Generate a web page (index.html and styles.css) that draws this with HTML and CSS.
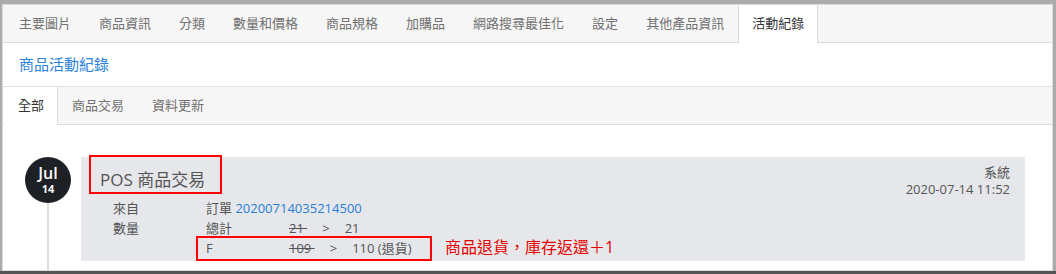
FILE: index.html
```html
<!DOCTYPE html>
<html lang="zh-Hant">
<head>
  <meta charset="UTF-8">
  <title>商品活動紀錄</title>
  <link rel="stylesheet" href="styles.css">
</head>
<body>
  <div class="panel">
    <ul class="tabs">
      <li>主要圖片</li>
      <li>商品資訊</li>
      <li>分類</li>
      <li>數量和價格</li>
      <li>商品規格</li>
      <li>加購品</li>
      <li>網路搜尋最佳化</li>
      <li>設定</li>
      <li>其他產品資訊</li>
      <li class="active">活動紀錄</li>
    </ul>

    <div class="title">商品活動紀錄</div>

    <ul class="subtabs">
      <li class="active">全部</li>
      <li>商品交易</li>
      <li>資料更新</li>
    </ul>

    <div class="timeline">
      <div class="tl-item">
        <div class="tl-side">
          <div class="tl-date">
            <span class="month">Jul</span>
            <span class="day">14</span>
          </div>
          <div class="tl-line"></div>
        </div>

        <div class="card">
          <div class="card-main">
            <div class="card-title">POS 商品交易</div>
            <div class="drow">
              <span class="dlabel">來自</span>
              <span>訂單 <a class="link">20200714035214500</a></span>
            </div>
            <div class="drow">
              <span class="dlabel">數量</span>
              <span class="sub">總計</span>
              <span class="old">21&nbsp;</span>
              <span class="arrow">&gt;</span>
              <span>21</span>
            </div>
            <div class="drow">
              <span class="dlabel"></span>
              <span class="sub">F</span>
              <span class="old">109&nbsp;</span>
              <span class="arrow">&gt;</span>
              <span>110 (退貨)</span>
            </div>
          </div>
          <div class="card-meta">
            <div>系統</div>
            <div>2020-07-14 11:52</div>
          </div>

          <!-- annotations -->
          <div class="mark mark-title"></div>
          <div class="mark mark-row"></div>
          <div class="note">商品退貨，庫存返還＋1</div>
        </div>
      </div>
    </div>
  </div>
  <div class="shade"></div>
</body>
</html>
```

FILE: styles.css
```css
html, body {
  height: 274px;
  overflow: hidden;
}
body {
  margin: 0;
  background: #ababab;
  font-family: "Open Sans", "Noto Sans CJK TC", sans-serif;
  font-size: 13px;
  color: #555;
}
.panel {
  box-sizing: border-box;
  margin: 4px 3px 0 2px;
  height: 267px;
  background: #fff;
  border: 1px solid #dcdcdc;
  overflow: hidden;
}
.shade {
  height: 3px;
  background: #555;
}
ul {
  list-style: none;
  margin: 0;
  padding: 0;
}
.tabs {
  display: flex;
  padding-left: 1px;
  height: 37px;
  background: #f6f6f6;
  border-bottom: 1px solid #dcdcdc;
}
.tabs li,
.subtabs li {
  padding: 0 13px;
  line-height: 37px;
  color: #707070;
  border-left: 1px solid transparent;
  border-right: 1px solid transparent;
}
.tabs li:first-child {
  padding-left: 14px;
}
.tabs li.active {
  background: #fff;
  color: #333;
  border-color: #dcdcdc;
  height: 38px;
}
.title {
  height: 43px;
  line-height: 43px;
  padding-left: 16px;
  font-size: 15px;
  color: #2a82d9;
  border-bottom: 1px solid #e2e2e2;
}
.subtabs {
  display: flex;
  padding-left: 1px;
  height: 37px;
  background: #f6f6f6;
  border-bottom: 1px solid #dcdcdc;
}
.subtabs li.active {
  background: #fff;
  color: #333;
  border-right-color: #dcdcdc;
  height: 38px;
}
.timeline {
  padding: 32px 0 0 22px;
}
.tl-item {
  display: flex;
  min-height: 150px;
}
.tl-side {
  width: 46px;
  display: flex;
  flex-direction: column;
  align-items: center;
}
.tl-date {
  width: 46px;
  height: 46px;
  border-radius: 50%;
  background: #1d2126;
  color: #fff;
  display: flex;
  flex-direction: column;
  align-items: center;
  justify-content: center;
  gap: 2px;
}
.month {
  font-size: 16px;
  font-weight: 600;
  line-height: 15px;
}
.day {
  font-size: 11px;
  font-weight: 700;
  line-height: 11px;
}
.tl-line {
  width: 2px;
  flex: 1;
  background: #dedede;
}
.card {
  position: relative;
  flex: 1;
  align-self: flex-start;
  display: flex;
  justify-content: space-between;
  margin: 0 27px 0 10px;
  padding: 7px 15px 3px 19px;
  background: #e5e7eb;
}
.card-title {
  margin-top: 4px;
  font-size: 17px;
  line-height: 24px;
  color: #555;
  margin-bottom: 6px;
}
.drow {
  display: flex;
  line-height: 20px;
  padding-left: 13px;
}
.dlabel {
  width: 93px;
}
.sub {
  width: 83px;
}
.old {
  text-decoration: line-through;
}
.arrow {
  margin: 0 15px;
}
.link {
  color: #2a7fd0;
}
.card-meta {
  text-align: right;
  line-height: 17px;
}
.mark {
  position: absolute;
  box-sizing: border-box;
  border: 2px solid #f00;
}
.mark-title {
  left: 8px;
  top: -2px;
  width: 133px;
  height: 39px;
}
.mark-row {
  left: 115px;
  top: 79px;
  width: 236px;
  height: 25px;
}
.note {
  position: absolute;
  left: 364px;
  top: 80px;
  font-size: 16px;
  line-height: 20px;
  color: #e60000;
  white-space: nowrap;
}
```
